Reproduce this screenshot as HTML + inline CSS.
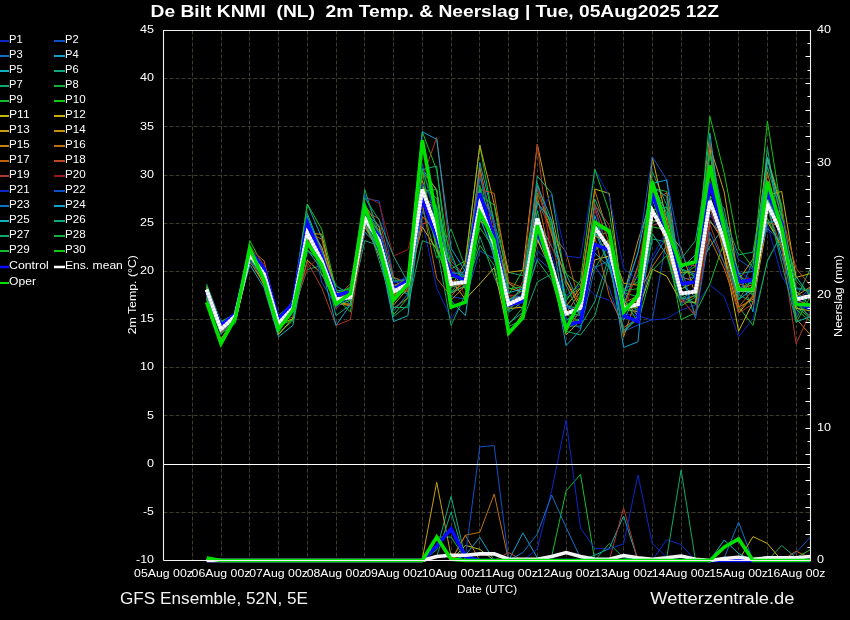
<!DOCTYPE html>
<html><head><meta charset="utf-8"><style>
html,body{margin:0;padding:0;background:#000;}
body{width:850px;height:620px;overflow:hidden;position:relative;font-family:"Liberation Sans",sans-serif;}
svg{position:absolute;left:0;top:0;will-change:transform;}
</style></head><body>
<svg width="850" height="620" viewBox="0 0 850 620" font-family="Liberation Sans, sans-serif">
<rect width="850" height="620" fill="#000"/>
<path d="M192.5,30.5V560.5 M221.5,30.5V560.5 M249.5,30.5V560.5 M278.5,30.5V560.5 M307.5,30.5V560.5 M336.5,30.5V560.5 M364.5,30.5V560.5 M393.5,30.5V560.5 M422.5,30.5V560.5 M451.5,30.5V560.5 M479.5,30.5V560.5 M508.5,30.5V560.5 M537.5,30.5V560.5 M566.5,30.5V560.5 M594.5,30.5V560.5 M623.5,30.5V560.5 M652.5,30.5V560.5 M681.5,30.5V560.5 M709.5,30.5V560.5 M738.5,30.5V560.5 M767.5,30.5V560.5 M796.5,30.5V560.5 M163.5,512.5H810.5 M163.5,415.5H810.5 M163.5,367.5H810.5 M163.5,319.5H810.5 M163.5,271.5H810.5 M163.5,223.5H810.5 M163.5,175.5H810.5 M163.5,126.5H810.5 M163.5,78.5H810.5" stroke="#3d3b2a" stroke-width="1" stroke-dasharray="4,2" fill="none"/>
<path d="M206.6,289.0 L221.0,329.3 L235.4,316.8 L249.8,258.9 L264.1,277.5 L278.5,321.6 L292.9,305.5 L307.3,218.6 L321.7,247.2 L336.0,295.1 L350.4,294.0 L364.8,227.5 L379.2,238.1 L393.5,282.8 L407.9,280.9 L422.3,221.1 L436.7,287.8 L451.1,318.7 L465.4,299.4 L479.8,220.1 L494.2,248.0 L508.6,300.6 L522.9,300.4 L537.3,217.5 L551.7,254.2 L566.1,300.3 L580.5,281.0 L594.8,295.0 L609.2,300.3 L623.6,313.8 L638.0,315.7 L652.3,320.1 L666.7,318.6 L681.1,310.0 L695.5,305.1 L709.9,284.9 L724.2,296.5 L738.6,336.9 L753.0,318.6 L767.4,261.8 L781.7,234.0 L796.1,293.9 L810.5,314.2" stroke="#0a28c8" stroke-width="1" fill="none"/>
<path d="M206.6,287.1 L221.0,333.1 L235.4,318.9 L249.8,257.0 L264.1,278.9 L278.5,324.2 L292.9,309.1 L307.3,251.4 L321.7,261.1 L336.0,296.5 L350.4,291.2 L364.8,198.2 L379.2,201.1 L393.5,277.1 L407.9,295.5 L422.3,183.9 L436.7,241.1 L451.1,296.6 L465.4,299.1 L479.8,250.8 L494.2,258.7 L508.6,299.3 L522.9,308.6 L537.3,257.9 L551.7,270.6 L566.1,295.9 L580.5,285.1 L594.8,265.8 L609.2,287.9 L623.6,331.6 L638.0,325.0 L652.3,319.6 L666.7,238.0 L681.1,279.6 L695.5,276.8 L709.9,181.2 L724.2,222.4 L738.6,259.5 L753.0,269.5 L767.4,157.8 L781.7,212.7 L796.1,314.7 L810.5,287.5" stroke="#1050c8" stroke-width="1" fill="none"/>
<path d="M206.6,287.4 L221.0,333.3 L235.4,320.0 L249.8,253.6 L264.1,281.2 L278.5,329.3 L292.9,306.8 L307.3,246.1 L321.7,247.9 L336.0,294.5 L350.4,295.3 L364.8,213.0 L379.2,225.4 L393.5,281.9 L407.9,278.4 L422.3,184.7 L436.7,236.8 L451.1,264.0 L465.4,278.8 L479.8,219.7 L494.2,235.5 L508.6,283.4 L522.9,293.3 L537.3,235.8 L551.7,268.6 L566.1,319.9 L580.5,314.4 L594.8,206.7 L609.2,254.9 L623.6,291.2 L638.0,313.8 L652.3,261.3 L666.7,236.9 L681.1,278.6 L695.5,261.8 L709.9,165.6 L724.2,222.7 L738.6,281.1 L753.0,279.3 L767.4,194.1 L781.7,226.8 L796.1,288.7 L810.5,291.4" stroke="#1070c8" stroke-width="1" fill="none"/>
<path d="M206.6,287.6 L221.0,322.9 L235.4,314.4 L249.8,251.1 L264.1,274.6 L278.5,323.7 L292.9,300.3 L307.3,204.0 L321.7,237.7 L336.0,290.7 L350.4,304.6 L364.8,232.0 L379.2,247.0 L393.5,292.2 L407.9,283.1 L422.3,197.5 L436.7,210.9 L451.1,271.3 L465.4,284.3 L479.8,162.4 L494.2,220.7 L508.6,300.3 L522.9,296.8 L537.3,221.3 L551.7,265.5 L566.1,345.6 L580.5,329.8 L594.8,230.3 L609.2,266.8 L623.6,320.3 L638.0,291.6 L652.3,186.5 L666.7,196.7 L681.1,297.6 L695.5,303.2 L709.9,221.9 L724.2,235.1 L738.6,271.5 L753.0,311.9 L767.4,204.3 L781.7,256.5 L796.1,301.6 L810.5,318.5" stroke="#10a0d0" stroke-width="1" fill="none"/>
<path d="M206.6,287.1 L221.0,327.8 L235.4,315.3 L249.8,248.1 L264.1,271.4 L278.5,322.5 L292.9,300.3 L307.3,213.5 L321.7,250.6 L336.0,285.9 L350.4,294.6 L364.8,206.7 L379.2,234.0 L393.5,286.2 L407.9,280.6 L422.3,168.7 L436.7,190.3 L451.1,300.6 L465.4,315.7 L479.8,217.2 L494.2,255.7 L508.6,323.3 L522.9,312.4 L537.3,219.4 L551.7,246.9 L566.1,273.8 L580.5,306.1 L594.8,226.1 L609.2,265.1 L623.6,305.5 L638.0,265.5 L652.3,210.1 L666.7,207.1 L681.1,268.8 L695.5,274.6 L709.9,246.3 L724.2,227.3 L738.6,286.4 L753.0,295.0 L767.4,199.7 L781.7,226.3 L796.1,276.5 L810.5,296.7" stroke="#10b0c0" stroke-width="1" fill="none"/>
<path d="M206.6,283.9 L221.0,322.8 L235.4,314.7 L249.8,254.2 L264.1,270.4 L278.5,321.5 L292.9,306.5 L307.3,216.4 L321.7,252.2 L336.0,315.7 L350.4,304.8 L364.8,240.6 L379.2,245.7 L393.5,292.1 L407.9,293.4 L422.3,198.6 L436.7,205.2 L451.1,274.1 L465.4,271.9 L479.8,190.2 L494.2,222.8 L508.6,272.4 L522.9,275.7 L537.3,201.3 L551.7,230.4 L566.1,326.1 L580.5,326.1 L594.8,301.6 L609.2,256.2 L623.6,333.1 L638.0,315.8 L652.3,239.0 L666.7,241.8 L681.1,299.8 L695.5,295.4 L709.9,149.7 L724.2,218.4 L738.6,273.9 L753.0,271.3 L767.4,182.9 L781.7,247.7 L796.1,318.8 L810.5,290.9" stroke="#10a880" stroke-width="1" fill="none"/>
<path d="M206.6,298.0 L221.0,329.0 L235.4,315.1 L249.8,251.5 L264.1,270.2 L278.5,321.3 L292.9,310.9 L307.3,269.5 L321.7,265.6 L336.0,305.1 L350.4,300.4 L364.8,227.2 L379.2,252.2 L393.5,316.7 L407.9,305.0 L422.3,240.6 L436.7,246.0 L451.1,325.4 L465.4,294.2 L479.8,236.4 L494.2,276.2 L508.6,312.4 L522.9,301.6 L537.3,260.4 L551.7,280.1 L566.1,324.6 L580.5,318.7 L594.8,222.7 L609.2,232.9 L623.6,289.1 L638.0,282.0 L652.3,171.8 L666.7,205.1 L681.1,275.2 L695.5,315.4 L709.9,195.9 L724.2,208.4 L738.6,282.7 L753.0,292.0 L767.4,146.8 L781.7,245.6 L796.1,298.7 L810.5,268.5" stroke="#10a868" stroke-width="1" fill="none"/>
<path d="M206.6,289.5 L221.0,324.5 L235.4,315.0 L249.8,248.1 L264.1,268.5 L278.5,323.9 L292.9,309.0 L307.3,230.7 L321.7,248.7 L336.0,297.2 L350.4,297.1 L364.8,225.4 L379.2,247.8 L393.5,285.7 L407.9,282.8 L422.3,206.8 L436.7,258.2 L451.1,229.0 L465.4,267.5 L479.8,170.5 L494.2,258.7 L508.6,306.8 L522.9,294.8 L537.3,183.1 L551.7,228.4 L566.1,298.1 L580.5,287.5 L594.8,268.9 L609.2,244.0 L623.6,300.5 L638.0,310.3 L652.3,188.1 L666.7,191.5 L681.1,294.2 L695.5,304.4 L709.9,204.1 L724.2,237.6 L738.6,294.6 L753.0,302.5 L767.4,157.4 L781.7,204.9 L796.1,302.6 L810.5,316.8" stroke="#10b040" stroke-width="1" fill="none"/>
<path d="M206.6,285.6 L221.0,321.5 L235.4,313.8 L249.8,251.5 L264.1,272.3 L278.5,332.9 L292.9,320.7 L307.3,245.3 L321.7,261.4 L336.0,305.7 L350.4,300.2 L364.8,216.9 L379.2,233.3 L393.5,278.2 L407.9,281.4 L422.3,187.7 L436.7,198.2 L451.1,272.4 L465.4,287.7 L479.8,227.5 L494.2,249.1 L508.6,308.5 L522.9,297.8 L537.3,218.9 L551.7,260.7 L566.1,314.3 L580.5,321.7 L594.8,235.4 L609.2,232.5 L623.6,292.7 L638.0,296.7 L652.3,197.7 L666.7,244.9 L681.1,319.6 L695.5,312.7 L709.9,283.9 L724.2,241.8 L738.6,306.9 L753.0,325.4 L767.4,260.8 L781.7,233.5 L796.1,306.3 L810.5,318.7" stroke="#10c030" stroke-width="1" fill="none"/>
<path d="M206.6,289.7 L221.0,328.0 L235.4,315.4 L249.8,240.6 L264.1,267.8 L278.5,320.9 L292.9,304.6 L307.3,204.0 L321.7,229.0 L336.0,289.5 L350.4,296.7 L364.8,218.9 L379.2,229.7 L393.5,290.4 L407.9,279.9 L422.3,131.7 L436.7,170.1 L451.1,268.9 L465.4,260.8 L479.8,145.2 L494.2,224.8 L508.6,294.6 L522.9,270.4 L537.3,193.3 L551.7,224.7 L566.1,273.9 L580.5,285.2 L594.8,244.5 L609.2,250.4 L623.6,303.4 L638.0,274.5 L652.3,179.5 L666.7,220.9 L681.1,276.0 L695.5,266.1 L709.9,173.4 L724.2,227.9 L738.6,288.8 L753.0,281.4 L767.4,218.1 L781.7,249.3 L796.1,309.4 L810.5,321.5" stroke="#10c810" stroke-width="1" fill="none"/>
<path d="M206.6,304.2 L221.0,338.9 L235.4,317.3 L249.8,252.5 L264.1,273.9 L278.5,324.3 L292.9,318.8 L307.3,223.2 L321.7,247.2 L336.0,292.0 L350.4,297.2 L364.8,219.6 L379.2,255.9 L393.5,295.0 L407.9,281.1 L422.3,226.9 L436.7,249.6 L451.1,280.3 L465.4,299.2 L479.8,283.9 L494.2,267.8 L508.6,335.0 L522.9,313.1 L537.3,240.3 L551.7,267.3 L566.1,306.1 L580.5,288.1 L594.8,189.1 L609.2,193.4 L623.6,309.1 L638.0,311.6 L652.3,269.1 L666.7,276.2 L681.1,301.9 L695.5,302.2 L709.9,196.0 L724.2,254.8 L738.6,331.2 L753.0,302.5 L767.4,221.9 L781.7,245.8 L796.1,308.4 L810.5,310.8" stroke="#c0b810" stroke-width="1" fill="none"/>
<path d="M206.6,288.1 L221.0,328.4 L235.4,317.2 L249.8,256.0 L264.1,285.6 L278.5,334.8 L292.9,318.0 L307.3,260.1 L321.7,273.9 L336.0,303.0 L350.4,305.6 L364.8,226.6 L379.2,248.1 L393.5,292.4 L407.9,281.8 L422.3,181.3 L436.7,245.7 L451.1,293.1 L465.4,285.7 L479.8,195.0 L494.2,235.8 L508.6,308.6 L522.9,307.2 L537.3,238.4 L551.7,272.3 L566.1,334.7 L580.5,320.4 L594.8,259.9 L609.2,256.0 L623.6,304.1 L638.0,308.0 L652.3,157.7 L666.7,220.3 L681.1,272.5 L695.5,271.6 L709.9,150.1 L724.2,254.5 L738.6,312.9 L753.0,296.4 L767.4,195.6 L781.7,191.4 L796.1,277.4 L810.5,273.5" stroke="#c8b010" stroke-width="1" fill="none"/>
<path d="M206.6,286.8 L221.0,326.0 L235.4,315.3 L249.8,249.6 L264.1,276.7 L278.5,321.0 L292.9,312.0 L307.3,233.6 L321.7,234.1 L336.0,295.3 L350.4,294.9 L364.8,204.8 L379.2,227.6 L393.5,296.1 L407.9,283.7 L422.3,171.6 L436.7,189.7 L451.1,287.3 L465.4,261.8 L479.8,145.2 L494.2,204.0 L508.6,272.4 L522.9,270.4 L537.3,144.2 L551.7,213.6 L566.1,281.0 L580.5,308.8 L594.8,248.5 L609.2,242.8 L623.6,283.2 L638.0,285.2 L652.3,220.5 L666.7,223.8 L681.1,289.2 L695.5,281.7 L709.9,146.1 L724.2,191.9 L738.6,280.1 L753.0,259.0 L767.4,158.4 L781.7,209.1 L796.1,296.4 L810.5,295.2" stroke="#c8a010" stroke-width="1" fill="none"/>
<path d="M206.6,288.4 L221.0,325.0 L235.4,316.6 L249.8,261.2 L264.1,284.1 L278.5,324.5 L292.9,312.2 L307.3,237.4 L321.7,267.3 L336.0,302.8 L350.4,304.1 L364.8,223.4 L379.2,255.2 L393.5,305.1 L407.9,288.2 L422.3,180.5 L436.7,230.4 L451.1,300.2 L465.4,285.7 L479.8,221.5 L494.2,227.0 L508.6,287.8 L522.9,292.4 L537.3,220.1 L551.7,268.7 L566.1,328.8 L580.5,319.7 L594.8,236.1 L609.2,242.2 L623.6,295.5 L638.0,240.6 L652.3,196.5 L666.7,229.5 L681.1,248.3 L695.5,295.5 L709.9,220.2 L724.2,242.3 L738.6,288.9 L753.0,284.6 L767.4,203.9 L781.7,228.1 L796.1,296.0 L810.5,286.7" stroke="#c89010" stroke-width="1" fill="none"/>
<path d="M206.6,300.2 L221.0,332.8 L235.4,320.9 L249.8,262.6 L264.1,276.1 L278.5,328.0 L292.9,307.6 L307.3,224.9 L321.7,251.1 L336.0,295.3 L350.4,295.5 L364.8,226.9 L379.2,246.1 L393.5,290.5 L407.9,291.3 L422.3,198.9 L436.7,208.5 L451.1,294.0 L465.4,279.9 L479.8,167.3 L494.2,236.1 L508.6,298.9 L522.9,296.7 L537.3,188.3 L551.7,235.0 L566.1,280.5 L580.5,304.4 L594.8,225.7 L609.2,247.7 L623.6,337.0 L638.0,293.2 L652.3,186.4 L666.7,251.2 L681.1,291.8 L695.5,292.7 L709.9,188.3 L724.2,226.9 L738.6,307.2 L753.0,299.2 L767.4,172.0 L781.7,234.0 L796.1,318.6 L810.5,335.0" stroke="#c88010" stroke-width="1" fill="none"/>
<path d="M206.6,292.0 L221.0,325.7 L235.4,314.8 L249.8,249.0 L264.1,260.8 L278.5,320.6 L292.9,309.0 L307.3,228.4 L321.7,250.6 L336.0,304.2 L350.4,305.0 L364.8,222.2 L379.2,240.9 L393.5,308.3 L407.9,298.0 L422.3,216.5 L436.7,231.9 L451.1,287.1 L465.4,283.9 L479.8,216.0 L494.2,232.7 L508.6,283.1 L522.9,292.6 L537.3,195.8 L551.7,265.2 L566.1,313.4 L580.5,291.2 L594.8,190.4 L609.2,236.3 L623.6,303.1 L638.0,295.8 L652.3,266.6 L666.7,245.8 L681.1,301.7 L695.5,295.4 L709.9,238.4 L724.2,268.5 L738.6,310.9 L753.0,295.5 L767.4,221.9 L781.7,227.1 L796.1,300.1 L810.5,305.0" stroke="#c07010" stroke-width="1" fill="none"/>
<path d="M206.6,296.0 L221.0,333.4 L235.4,318.1 L249.8,251.7 L264.1,274.0 L278.5,322.4 L292.9,311.3 L307.3,232.4 L321.7,239.1 L336.0,298.3 L350.4,283.9 L364.8,211.6 L379.2,234.0 L393.5,285.6 L407.9,279.4 L422.3,203.6 L436.7,278.4 L451.1,296.4 L465.4,279.4 L479.8,189.4 L494.2,193.4 L508.6,282.2 L522.9,287.6 L537.3,187.4 L551.7,233.1 L566.1,252.1 L580.5,306.7 L594.8,237.0 L609.2,295.5 L623.6,327.6 L638.0,318.2 L652.3,203.2 L666.7,192.5 L681.1,276.4 L695.5,282.5 L709.9,208.6 L724.2,249.9 L738.6,307.1 L753.0,289.7 L767.4,202.8 L781.7,232.5 L796.1,301.7 L810.5,287.4" stroke="#c06010" stroke-width="1" fill="none"/>
<path d="M206.6,289.4 L221.0,327.4 L235.4,315.5 L249.8,258.4 L264.1,270.8 L278.5,320.7 L292.9,311.1 L307.3,224.7 L321.7,250.4 L336.0,308.8 L350.4,292.7 L364.8,210.2 L379.2,219.0 L393.5,277.3 L407.9,282.6 L422.3,223.8 L436.7,220.3 L451.1,280.3 L465.4,284.1 L479.8,200.5 L494.2,241.3 L508.6,295.0 L522.9,296.9 L537.3,218.4 L551.7,276.1 L566.1,331.5 L580.5,310.2 L594.8,203.8 L609.2,242.9 L623.6,307.2 L638.0,266.9 L652.3,199.0 L666.7,217.1 L681.1,263.6 L695.5,265.8 L709.9,141.9 L724.2,232.5 L738.6,283.8 L753.0,288.1 L767.4,197.9 L781.7,214.6 L796.1,268.5 L810.5,285.6" stroke="#c04828" stroke-width="1" fill="none"/>
<path d="M206.6,289.5 L221.0,332.2 L235.4,315.9 L249.8,251.0 L264.1,274.2 L278.5,321.9 L292.9,317.0 L307.3,261.8 L321.7,287.8 L336.0,325.4 L350.4,319.6 L364.8,226.8 L379.2,237.2 L393.5,288.6 L407.9,288.3 L422.3,178.3 L436.7,137.5 L451.1,261.1 L465.4,276.1 L479.8,172.8 L494.2,226.5 L508.6,311.0 L522.9,281.1 L537.3,144.2 L551.7,265.3 L566.1,315.0 L580.5,300.1 L594.8,205.0 L609.2,225.3 L623.6,300.6 L638.0,315.2 L652.3,225.4 L666.7,220.8 L681.1,298.4 L695.5,316.2 L709.9,224.4 L724.2,263.1 L738.6,313.0 L753.0,304.0 L767.4,209.6 L781.7,247.0 L796.1,343.7 L810.5,312.4" stroke="#b03828" stroke-width="1" fill="none"/>
<path d="M206.6,293.2 L221.0,330.4 L235.4,315.3 L249.8,245.9 L264.1,264.5 L278.5,321.7 L292.9,308.7 L307.3,268.5 L321.7,254.3 L336.0,303.1 L350.4,285.9 L364.8,196.2 L379.2,203.5 L393.5,256.0 L407.9,249.7 L422.3,194.3 L436.7,247.0 L451.1,265.9 L465.4,296.8 L479.8,204.6 L494.2,241.2 L508.6,297.3 L522.9,291.6 L537.3,185.9 L551.7,246.6 L566.1,286.5 L580.5,301.6 L594.8,210.2 L609.2,253.2 L623.6,312.8 L638.0,267.8 L652.3,183.3 L666.7,226.1 L681.1,300.0 L695.5,314.1 L709.9,215.9 L724.2,225.2 L738.6,277.9 L753.0,278.6 L767.4,188.7 L781.7,208.6 L796.1,292.9 L810.5,300.0" stroke="#a01818" stroke-width="1" fill="none"/>
<path d="M206.6,288.4 L221.0,329.0 L235.4,317.4 L249.8,256.5 L264.1,273.1 L278.5,321.9 L292.9,314.6 L307.3,233.8 L321.7,259.1 L336.0,307.2 L350.4,296.2 L364.8,219.4 L379.2,243.9 L393.5,283.1 L407.9,276.2 L422.3,183.4 L436.7,208.3 L451.1,293.9 L465.4,269.1 L479.8,193.7 L494.2,222.1 L508.6,301.9 L522.9,290.7 L537.3,213.6 L551.7,194.3 L566.1,256.0 L580.5,257.9 L594.8,169.3 L609.2,196.2 L623.6,268.5 L638.0,280.1 L652.3,256.8 L666.7,231.7 L681.1,305.6 L695.5,285.9 L709.9,213.7 L724.2,241.4 L738.6,271.7 L753.0,280.6 L767.4,224.6 L781.7,276.2 L796.1,300.1 L810.5,288.7" stroke="#0a28c8" stroke-width="1" fill="none"/>
<path d="M206.6,289.1 L221.0,327.6 L235.4,314.9 L249.8,261.4 L264.1,279.1 L278.5,322.8 L292.9,305.3 L307.3,219.7 L321.7,282.1 L336.0,305.9 L350.4,297.1 L364.8,194.2 L379.2,233.2 L393.5,292.5 L407.9,284.0 L422.3,163.9 L436.7,227.4 L451.1,257.0 L465.4,283.5 L479.8,201.5 L494.2,248.3 L508.6,305.0 L522.9,302.0 L537.3,250.7 L551.7,264.7 L566.1,307.4 L580.5,312.2 L594.8,227.5 L609.2,231.1 L623.6,300.3 L638.0,252.1 L652.3,156.7 L666.7,179.9 L681.1,252.1 L695.5,281.0 L709.9,197.9 L724.2,231.7 L738.6,286.4 L753.0,291.4 L767.4,198.4 L781.7,238.9 L796.1,321.8 L810.5,316.3" stroke="#1050c8" stroke-width="1" fill="none"/>
<path d="M206.6,294.7 L221.0,334.5 L235.4,316.7 L249.8,260.5 L264.1,274.9 L278.5,329.0 L292.9,309.8 L307.3,220.8 L321.7,249.5 L336.0,301.4 L350.4,297.9 L364.8,217.5 L379.2,254.1 L393.5,310.9 L407.9,294.2 L422.3,211.0 L436.7,238.2 L451.1,271.9 L465.4,275.2 L479.8,177.5 L494.2,223.9 L508.6,298.6 L522.9,295.6 L537.3,220.6 L551.7,266.7 L566.1,318.1 L580.5,328.7 L594.8,267.9 L609.2,260.3 L623.6,331.3 L638.0,315.1 L652.3,209.1 L666.7,238.3 L681.1,266.8 L695.5,318.6 L709.9,232.0 L724.2,263.3 L738.6,294.7 L753.0,261.0 L767.4,228.5 L781.7,241.6 L796.1,296.2 L810.5,298.4" stroke="#1070c8" stroke-width="1" fill="none"/>
<path d="M206.6,299.1 L221.0,329.8 L235.4,315.5 L249.8,253.1 L264.1,276.2 L278.5,322.4 L292.9,310.1 L307.3,232.2 L321.7,266.7 L336.0,325.4 L350.4,304.6 L364.8,222.5 L379.2,233.7 L393.5,299.6 L407.9,276.2 L422.3,131.7 L436.7,139.4 L451.1,248.3 L465.4,271.4 L479.8,193.4 L494.2,258.8 L508.6,304.3 L522.9,285.9 L537.3,185.3 L551.7,220.4 L566.1,306.1 L580.5,313.5 L594.8,215.6 L609.2,257.0 L623.6,347.5 L638.0,341.8 L652.3,183.5 L666.7,179.9 L681.1,283.4 L695.5,297.2 L709.9,199.2 L724.2,247.4 L738.6,276.1 L753.0,284.8 L767.4,222.3 L781.7,220.7 L796.1,301.6 L810.5,294.4" stroke="#10a0d0" stroke-width="1" fill="none"/>
<path d="M206.6,291.3 L221.0,328.9 L235.4,317.6 L249.8,264.7 L264.1,287.8 L278.5,336.9 L292.9,325.4 L307.3,249.5 L321.7,269.6 L336.0,298.6 L350.4,296.4 L364.8,223.3 L379.2,249.3 L393.5,321.5 L407.9,315.7 L422.3,200.5 L436.7,218.0 L451.1,283.0 L465.4,283.6 L479.8,189.2 L494.2,237.4 L508.6,292.6 L522.9,288.9 L537.3,202.6 L551.7,220.8 L566.1,305.3 L580.5,309.5 L594.8,252.9 L609.2,267.7 L623.6,294.0 L638.0,252.7 L652.3,184.6 L666.7,213.1 L681.1,268.7 L695.5,254.6 L709.9,133.2 L724.2,241.0 L738.6,299.6 L753.0,288.7 L767.4,157.5 L781.7,219.5 L796.1,305.9 L810.5,303.9" stroke="#10b0c0" stroke-width="1" fill="none"/>
<path d="M206.6,296.1 L221.0,327.3 L235.4,316.3 L249.8,254.4 L264.1,266.1 L278.5,315.7 L292.9,302.9 L307.3,230.1 L321.7,253.5 L336.0,290.9 L350.4,289.4 L364.8,197.9 L379.2,220.1 L393.5,256.0 L407.9,282.2 L422.3,169.6 L436.7,166.1 L451.1,292.8 L465.4,285.5 L479.8,204.0 L494.2,249.4 L508.6,310.9 L522.9,294.0 L537.3,176.0 L551.7,193.4 L566.1,284.8 L580.5,316.6 L594.8,198.9 L609.2,232.6 L623.6,300.5 L638.0,316.0 L652.3,233.6 L666.7,254.9 L681.1,298.9 L695.5,289.9 L709.9,198.7 L724.2,233.2 L738.6,299.8 L753.0,277.4 L767.4,205.5 L781.7,262.8 L796.1,321.9 L810.5,316.6" stroke="#10a880" stroke-width="1" fill="none"/>
<path d="M206.6,294.7 L221.0,330.0 L235.4,319.8 L249.8,257.8 L264.1,270.6 L278.5,320.0 L292.9,306.4 L307.3,228.9 L321.7,259.5 L336.0,299.3 L350.4,293.9 L364.8,215.5 L379.2,260.8 L393.5,307.3 L407.9,307.7 L422.3,195.0 L436.7,246.5 L451.1,288.3 L465.4,268.8 L479.8,203.6 L494.2,254.3 L508.6,326.6 L522.9,319.6 L537.3,282.0 L551.7,273.9 L566.1,331.3 L580.5,335.0 L594.8,315.7 L609.2,263.8 L623.6,330.1 L638.0,319.3 L652.3,222.6 L666.7,214.1 L681.1,258.9 L695.5,240.6 L709.9,155.1 L724.2,217.4 L738.6,254.9 L753.0,252.1 L767.4,166.7 L781.7,216.5 L796.1,287.7 L810.5,290.4" stroke="#10a868" stroke-width="1" fill="none"/>
<path d="M206.6,297.9 L221.0,333.6 L235.4,323.4 L249.8,254.3 L264.1,272.3 L278.5,328.1 L292.9,305.2 L307.3,219.5 L321.7,275.1 L336.0,294.0 L350.4,290.4 L364.8,189.5 L379.2,235.1 L393.5,280.8 L407.9,280.9 L422.3,170.6 L436.7,209.1 L451.1,253.0 L465.4,289.8 L479.8,245.3 L494.2,265.4 L508.6,324.6 L522.9,307.4 L537.3,226.8 L551.7,264.8 L566.1,313.4 L580.5,315.1 L594.8,250.6 L609.2,239.4 L623.6,290.8 L638.0,288.6 L652.3,209.7 L666.7,207.0 L681.1,289.9 L695.5,275.5 L709.9,152.2 L724.2,226.5 L738.6,272.4 L753.0,295.0 L767.4,180.5 L781.7,224.3 L796.1,322.7 L810.5,296.2" stroke="#10b040" stroke-width="1" fill="none"/>
<path d="M206.6,288.3 L221.0,330.1 L235.4,316.7 L249.8,253.5 L264.1,275.4 L278.5,323.1 L292.9,311.6 L307.3,229.0 L321.7,257.9 L336.0,297.9 L350.4,311.9 L364.8,220.2 L379.2,241.4 L393.5,314.8 L407.9,297.8 L422.3,190.5 L436.7,189.7 L451.1,292.7 L465.4,273.8 L479.8,195.0 L494.2,205.1 L508.6,288.8 L522.9,286.8 L537.3,210.7 L551.7,269.4 L566.1,300.8 L580.5,280.6 L594.8,169.3 L609.2,211.8 L623.6,298.6 L638.0,322.6 L652.3,270.6 L666.7,255.5 L681.1,305.9 L695.5,297.1 L709.9,196.1 L724.2,242.3 L738.6,288.6 L753.0,290.9 L767.4,199.1 L781.7,220.8 L796.1,280.9 L810.5,295.0" stroke="#10c030" stroke-width="1" fill="none"/>
<path d="M206.6,288.8 L221.0,328.3 L235.4,314.7 L249.8,258.1 L264.1,277.6 L278.5,325.6 L292.9,320.0 L307.3,250.1 L321.7,261.6 L336.0,294.8 L350.4,287.1 L364.8,215.3 L379.2,250.4 L393.5,293.5 L407.9,280.8 L422.3,170.3 L436.7,251.5 L451.1,277.8 L465.4,275.9 L479.8,185.2 L494.2,242.9 L508.6,300.0 L522.9,290.0 L537.3,218.7 L551.7,274.6 L566.1,321.4 L580.5,305.8 L594.8,225.8 L609.2,232.0 L623.6,309.3 L638.0,305.9 L652.3,226.8 L666.7,229.8 L681.1,269.6 L695.5,276.7 L709.9,116.3 L724.2,173.1 L738.6,248.3 L753.0,267.7 L767.4,121.1 L781.7,212.5 L796.1,291.1 L810.5,306.3" stroke="#10c810" stroke-width="1" fill="none"/>
<path d="M206.6,560.5 L221.0,560.5 L235.4,560.5 L249.8,560.5 L264.1,560.5 L278.5,560.5 L292.9,560.5 L307.3,560.5 L321.7,560.5 L336.0,560.5 L350.4,560.5 L364.8,560.5 L379.2,560.5 L393.5,560.5 L407.9,560.5 L422.3,560.5 L436.7,560.5 L451.1,560.5 L465.4,560.5 L479.8,560.5 L494.2,560.5 L508.6,560.5 L522.9,560.5 L537.3,560.5 L551.7,560.5 L566.1,560.5 L580.5,560.5 L594.8,560.5 L609.2,560.5 L623.6,560.5 L638.0,560.5 L652.3,560.5 L666.7,539.6 L681.1,544.6 L695.5,560.5 L709.9,560.5 L724.2,560.5 L738.6,560.5 L753.0,560.5 L767.4,560.5 L781.7,560.5 L796.1,560.5 L810.5,560.5" stroke="#0a28c8" stroke-width="1" fill="none"/>
<path d="M206.6,560.5 L221.0,560.5 L235.4,560.5 L249.8,560.5 L264.1,560.5 L278.5,560.5 L292.9,560.5 L307.3,560.5 L321.7,560.5 L336.0,560.5 L350.4,560.5 L364.8,560.5 L379.2,560.5 L393.5,560.5 L407.9,560.5 L422.3,560.5 L436.7,560.5 L451.1,560.5 L465.4,560.5 L479.8,560.5 L494.2,560.5 L508.6,560.5 L522.9,560.5 L537.3,560.5 L551.7,560.5 L566.1,560.5 L580.5,560.5 L594.8,560.5 L609.2,560.5 L623.6,560.5 L638.0,560.5 L652.3,560.5 L666.7,560.5 L681.1,560.5 L695.5,560.5 L709.9,560.5 L724.2,560.5 L738.6,560.5 L753.0,560.5 L767.4,560.5 L781.7,560.5 L796.1,552.5 L810.5,537.0" stroke="#1050c8" stroke-width="1" fill="none"/>
<path d="M206.6,560.5 L221.0,560.5 L235.4,560.5 L249.8,560.5 L264.1,560.5 L278.5,560.5 L292.9,560.5 L307.3,560.5 L321.7,560.5 L336.0,560.5 L350.4,560.5 L364.8,560.5 L379.2,560.5 L393.5,560.5 L407.9,560.5 L422.3,560.5 L436.7,560.5 L451.1,560.5 L465.4,560.5 L479.8,560.5 L494.2,560.5 L508.6,560.5 L522.9,560.5 L537.3,560.5 L551.7,560.5 L566.1,560.5 L580.5,560.5 L594.8,560.5 L609.2,560.5 L623.6,560.5 L638.0,560.5 L652.3,560.5 L666.7,560.5 L681.1,560.5 L695.5,560.5 L709.9,560.5 L724.2,557.9 L738.6,522.1 L753.0,560.5 L767.4,560.5 L781.7,560.5 L796.1,560.5 L810.5,560.5" stroke="#1070c8" stroke-width="1" fill="none"/>
<path d="M206.6,560.5 L221.0,560.5 L235.4,560.5 L249.8,560.5 L264.1,560.5 L278.5,560.5 L292.9,560.5 L307.3,560.5 L321.7,560.5 L336.0,560.5 L350.4,560.5 L364.8,560.5 L379.2,560.5 L393.5,560.5 L407.9,560.5 L422.3,560.5 L436.7,560.5 L451.1,560.5 L465.4,560.5 L479.8,560.5 L494.2,560.5 L508.6,560.5 L522.9,532.9 L537.3,557.9 L551.7,560.5 L566.1,560.5 L580.5,560.5 L594.8,560.5 L609.2,560.5 L623.6,560.5 L638.0,560.5 L652.3,560.5 L666.7,560.5 L681.1,560.5 L695.5,560.5 L709.9,560.5 L724.2,560.5 L738.6,560.5 L753.0,560.5 L767.4,560.5 L781.7,560.5 L796.1,560.5 L810.5,560.5" stroke="#10a0d0" stroke-width="1" fill="none"/>
<path d="M206.6,560.5 L221.0,560.5 L235.4,560.5 L249.8,560.5 L264.1,560.5 L278.5,560.5 L292.9,560.5 L307.3,560.5 L321.7,560.5 L336.0,560.5 L350.4,560.5 L364.8,560.5 L379.2,560.5 L393.5,560.5 L407.9,560.5 L422.3,560.5 L436.7,560.5 L451.1,560.5 L465.4,560.5 L479.8,560.5 L494.2,560.5 L508.6,560.5 L522.9,560.5 L537.3,560.5 L551.7,560.5 L566.1,560.5 L580.5,560.5 L594.8,555.2 L609.2,548.6 L623.6,516.0 L638.0,560.5 L652.3,560.5 L666.7,560.5 L681.1,560.5 L695.5,560.5 L709.9,560.5 L724.2,560.5 L738.6,560.5 L753.0,560.5 L767.4,560.5 L781.7,560.5 L796.1,560.5 L810.5,560.5" stroke="#10b0c0" stroke-width="1" fill="none"/>
<path d="M206.6,560.5 L221.0,560.5 L235.4,560.5 L249.8,560.5 L264.1,560.5 L278.5,560.5 L292.9,560.5 L307.3,560.5 L321.7,560.5 L336.0,560.5 L350.4,560.5 L364.8,560.5 L379.2,560.5 L393.5,560.5 L407.9,560.5 L422.3,560.5 L436.7,549.9 L451.1,496.4 L465.4,557.9 L479.8,560.5 L494.2,560.5 L508.6,560.5 L522.9,560.5 L537.3,560.5 L551.7,560.5 L566.1,560.5 L580.5,560.5 L594.8,560.5 L609.2,560.5 L623.6,560.5 L638.0,560.5 L652.3,560.5 L666.7,560.5 L681.1,560.5 L695.5,560.5 L709.9,560.5 L724.2,560.5 L738.6,560.5 L753.0,560.5 L767.4,560.5 L781.7,560.5 L796.1,560.5 L810.5,560.5" stroke="#10a880" stroke-width="1" fill="none"/>
<path d="M206.6,560.5 L221.0,560.5 L235.4,560.5 L249.8,560.5 L264.1,560.5 L278.5,560.5 L292.9,560.5 L307.3,560.5 L321.7,560.5 L336.0,560.5 L350.4,560.5 L364.8,560.5 L379.2,560.5 L393.5,560.5 L407.9,560.5 L422.3,560.5 L436.7,560.5 L451.1,560.5 L465.4,560.5 L479.8,560.5 L494.2,560.5 L508.6,560.5 L522.9,560.5 L537.3,560.5 L551.7,560.5 L566.1,560.5 L580.5,560.5 L594.8,560.5 L609.2,560.5 L623.6,560.5 L638.0,560.5 L652.3,560.5 L666.7,560.5 L681.1,560.5 L695.5,560.5 L709.9,560.5 L724.2,560.5 L738.6,560.5 L753.0,560.5 L767.4,560.5 L781.7,545.5 L796.1,557.9 L810.5,560.5" stroke="#10a868" stroke-width="1" fill="none"/>
<path d="M206.6,560.5 L221.0,560.5 L235.4,560.5 L249.8,560.5 L264.1,560.5 L278.5,560.5 L292.9,560.5 L307.3,560.5 L321.7,560.5 L336.0,560.5 L350.4,560.5 L364.8,560.5 L379.2,560.5 L393.5,560.5 L407.9,560.5 L422.3,560.5 L436.7,537.0 L451.1,537.0 L465.4,559.2 L479.8,560.5 L494.2,560.5 L508.6,560.5 L522.9,560.5 L537.3,560.5 L551.7,560.5 L566.1,560.5 L580.5,560.5 L594.8,560.5 L609.2,560.5 L623.6,560.5 L638.0,560.5 L652.3,560.5 L666.7,560.5 L681.1,560.5 L695.5,560.5 L709.9,560.5 L724.2,560.5 L738.6,560.5 L753.0,560.5 L767.4,560.5 L781.7,560.5 L796.1,560.5 L810.5,560.5" stroke="#10b040" stroke-width="1" fill="none"/>
<path d="M206.6,560.5 L221.0,560.5 L235.4,560.5 L249.8,560.5 L264.1,560.5 L278.5,560.5 L292.9,560.5 L307.3,560.5 L321.7,560.5 L336.0,560.5 L350.4,560.5 L364.8,560.5 L379.2,560.5 L393.5,560.5 L407.9,560.5 L422.3,560.5 L436.7,560.5 L451.1,560.5 L465.4,560.5 L479.8,560.5 L494.2,560.5 L508.6,560.5 L522.9,560.5 L537.3,560.5 L551.7,556.5 L566.1,490.9 L580.5,474.4 L594.8,560.5 L609.2,560.5 L623.6,560.5 L638.0,560.5 L652.3,560.5 L666.7,560.5 L681.1,560.5 L695.5,560.5 L709.9,560.5 L724.2,560.5 L738.6,560.5 L753.0,560.5 L767.4,560.5 L781.7,560.5 L796.1,560.5 L810.5,560.5" stroke="#10c030" stroke-width="1" fill="none"/>
<path d="M206.6,560.5 L221.0,560.5 L235.4,560.5 L249.8,560.5 L264.1,560.5 L278.5,560.5 L292.9,560.5 L307.3,560.5 L321.7,560.5 L336.0,560.5 L350.4,560.5 L364.8,560.5 L379.2,560.5 L393.5,560.5 L407.9,560.5 L422.3,560.5 L436.7,560.5 L451.1,560.5 L465.4,560.5 L479.8,560.5 L494.2,560.5 L508.6,560.5 L522.9,560.5 L537.3,560.5 L551.7,560.5 L566.1,560.5 L580.5,560.5 L594.8,560.5 L609.2,560.5 L623.6,560.5 L638.0,560.5 L652.3,560.5 L666.7,560.5 L681.1,560.5 L695.5,560.5 L709.9,560.5 L724.2,560.5 L738.6,560.5 L753.0,560.5 L767.4,560.5 L781.7,560.5 L796.1,560.5 L810.5,560.5" stroke="#10c810" stroke-width="1" fill="none"/>
<path d="M206.6,560.5 L221.0,560.5 L235.4,560.5 L249.8,560.5 L264.1,560.5 L278.5,560.5 L292.9,560.5 L307.3,560.5 L321.7,560.5 L336.0,560.5 L350.4,560.5 L364.8,560.5 L379.2,560.5 L393.5,560.5 L407.9,560.5 L422.3,560.5 L436.7,560.5 L451.1,560.5 L465.4,545.4 L479.8,549.4 L494.2,560.5 L508.6,560.5 L522.9,560.5 L537.3,560.5 L551.7,560.5 L566.1,560.5 L580.5,560.5 L594.8,560.5 L609.2,560.5 L623.6,560.5 L638.0,560.5 L652.3,560.5 L666.7,560.5 L681.1,560.5 L695.5,560.5 L709.9,560.5 L724.2,560.5 L738.6,560.5 L753.0,560.5 L767.4,560.5 L781.7,560.5 L796.1,560.5 L810.5,560.5" stroke="#c0b810" stroke-width="1" fill="none"/>
<path d="M206.6,560.5 L221.0,560.5 L235.4,560.5 L249.8,560.5 L264.1,560.5 L278.5,560.5 L292.9,560.5 L307.3,560.5 L321.7,560.5 L336.0,560.5 L350.4,560.5 L364.8,560.5 L379.2,560.5 L393.5,560.5 L407.9,560.5 L422.3,560.5 L436.7,560.5 L451.1,560.5 L465.4,560.5 L479.8,560.5 L494.2,560.5 L508.6,560.5 L522.9,560.5 L537.3,560.5 L551.7,560.5 L566.1,560.5 L580.5,560.5 L594.8,560.5 L609.2,560.5 L623.6,560.5 L638.0,560.5 L652.3,560.5 L666.7,560.5 L681.1,560.5 L695.5,560.5 L709.9,560.5 L724.2,560.5 L738.6,560.5 L753.0,536.6 L767.4,543.5 L781.7,560.5 L796.1,560.5 L810.5,560.5" stroke="#c8b010" stroke-width="1" fill="none"/>
<path d="M206.6,560.5 L221.0,560.5 L235.4,560.5 L249.8,560.5 L264.1,560.5 L278.5,560.5 L292.9,560.5 L307.3,560.5 L321.7,560.5 L336.0,560.5 L350.4,560.5 L364.8,560.5 L379.2,560.5 L393.5,560.5 L407.9,560.5 L422.3,559.2 L436.7,482.3 L451.1,556.5 L465.4,560.5 L479.8,560.5 L494.2,560.5 L508.6,560.5 L522.9,560.5 L537.3,560.5 L551.7,560.5 L566.1,560.5 L580.5,560.5 L594.8,560.5 L609.2,560.5 L623.6,560.5 L638.0,560.5 L652.3,560.5 L666.7,560.5 L681.1,560.5 L695.5,560.5 L709.9,560.5 L724.2,560.5 L738.6,560.5 L753.0,560.5 L767.4,560.5 L781.7,560.5 L796.1,560.5 L810.5,560.5" stroke="#c8a010" stroke-width="1" fill="none"/>
<path d="M206.6,560.5 L221.0,560.5 L235.4,560.5 L249.8,560.5 L264.1,560.5 L278.5,560.5 L292.9,560.5 L307.3,560.5 L321.7,560.5 L336.0,560.5 L350.4,560.5 L364.8,560.5 L379.2,560.5 L393.5,560.5 L407.9,560.5 L422.3,560.5 L436.7,560.5 L451.1,560.5 L465.4,560.5 L479.8,560.5 L494.2,560.5 L508.6,560.5 L522.9,560.5 L537.3,560.5 L551.7,560.5 L566.1,560.5 L580.5,560.5 L594.8,560.5 L609.2,560.5 L623.6,560.5 L638.0,560.5 L652.3,560.5 L666.7,560.5 L681.1,560.5 L695.5,560.5 L709.9,560.5 L724.2,560.5 L738.6,560.5 L753.0,560.5 L767.4,560.5 L781.7,560.5 L796.1,560.5 L810.5,560.5" stroke="#c89010" stroke-width="1" fill="none"/>
<path d="M206.6,560.5 L221.0,560.5 L235.4,560.5 L249.8,560.5 L264.1,560.5 L278.5,560.5 L292.9,560.5 L307.3,560.5 L321.7,560.5 L336.0,560.5 L350.4,560.5 L364.8,560.5 L379.2,560.5 L393.5,560.5 L407.9,560.5 L422.3,560.5 L436.7,560.5 L451.1,560.5 L465.4,535.3 L479.8,560.5 L494.2,560.5 L508.6,560.5 L522.9,560.5 L537.3,560.5 L551.7,560.5 L566.1,560.5 L580.5,560.5 L594.8,560.5 L609.2,560.5 L623.6,560.5 L638.0,560.5 L652.3,560.5 L666.7,560.5 L681.1,560.5 L695.5,560.5 L709.9,560.5 L724.2,560.5 L738.6,560.5 L753.0,560.5 L767.4,560.5 L781.7,560.5 L796.1,560.5 L810.5,560.5" stroke="#c88010" stroke-width="1" fill="none"/>
<path d="M206.6,560.5 L221.0,560.5 L235.4,560.5 L249.8,560.5 L264.1,560.5 L278.5,560.5 L292.9,560.5 L307.3,560.5 L321.7,560.5 L336.0,560.5 L350.4,560.5 L364.8,560.5 L379.2,560.5 L393.5,560.5 L407.9,560.5 L422.3,560.5 L436.7,560.5 L451.1,560.5 L465.4,535.1 L479.8,532.4 L494.2,494.0 L508.6,560.5 L522.9,560.5 L537.3,560.5 L551.7,560.5 L566.1,560.5 L580.5,560.5 L594.8,560.5 L609.2,560.5 L623.6,560.5 L638.0,560.5 L652.3,560.5 L666.7,560.5 L681.1,560.5 L695.5,560.5 L709.9,560.5 L724.2,560.5 L738.6,560.5 L753.0,560.5 L767.4,560.5 L781.7,560.5 L796.1,560.5 L810.5,560.5" stroke="#c07010" stroke-width="1" fill="none"/>
<path d="M206.6,560.5 L221.0,560.5 L235.4,560.5 L249.8,560.5 L264.1,560.5 L278.5,560.5 L292.9,560.5 L307.3,560.5 L321.7,560.5 L336.0,560.5 L350.4,560.5 L364.8,560.5 L379.2,560.5 L393.5,560.5 L407.9,560.5 L422.3,560.5 L436.7,560.5 L451.1,560.5 L465.4,560.5 L479.8,560.5 L494.2,560.5 L508.6,560.5 L522.9,560.5 L537.3,560.5 L551.7,560.5 L566.1,560.5 L580.5,560.5 L594.8,560.5 L609.2,560.5 L623.6,560.5 L638.0,560.5 L652.3,560.5 L666.7,560.5 L681.1,560.5 L695.5,560.5 L709.9,560.5 L724.2,560.5 L738.6,560.5 L753.0,560.5 L767.4,560.5 L781.7,560.5 L796.1,551.2 L810.5,557.9" stroke="#c06010" stroke-width="1" fill="none"/>
<path d="M206.6,560.5 L221.0,560.5 L235.4,560.5 L249.8,560.5 L264.1,560.5 L278.5,560.5 L292.9,560.5 L307.3,560.5 L321.7,560.5 L336.0,560.5 L350.4,560.5 L364.8,560.5 L379.2,560.5 L393.5,560.5 L407.9,560.5 L422.3,560.5 L436.7,560.5 L451.1,560.5 L465.4,560.5 L479.8,560.5 L494.2,560.5 L508.6,552.5 L522.9,560.5 L537.3,560.5 L551.7,560.5 L566.1,560.5 L580.5,560.5 L594.8,560.5 L609.2,560.5 L623.6,560.5 L638.0,560.5 L652.3,560.5 L666.7,560.5 L681.1,560.5 L695.5,560.5 L709.9,560.5 L724.2,560.5 L738.6,560.5 L753.0,560.5 L767.4,560.5 L781.7,560.5 L796.1,560.5 L810.5,560.5" stroke="#c04828" stroke-width="1" fill="none"/>
<path d="M206.6,560.5 L221.0,560.5 L235.4,560.5 L249.8,560.5 L264.1,560.5 L278.5,560.5 L292.9,560.5 L307.3,560.5 L321.7,560.5 L336.0,560.5 L350.4,560.5 L364.8,560.5 L379.2,560.5 L393.5,560.5 L407.9,560.5 L422.3,560.5 L436.7,560.5 L451.1,560.5 L465.4,560.5 L479.8,560.5 L494.2,560.5 L508.6,560.5 L522.9,560.5 L537.3,560.5 L551.7,560.5 L566.1,560.5 L580.5,560.5 L594.8,560.5 L609.2,560.5 L623.6,508.0 L638.0,560.5 L652.3,560.5 L666.7,560.5 L681.1,560.5 L695.5,560.5 L709.9,560.5 L724.2,560.5 L738.6,560.5 L753.0,560.5 L767.4,560.5 L781.7,560.5 L796.1,560.5 L810.5,560.5" stroke="#b03828" stroke-width="1" fill="none"/>
<path d="M206.6,560.5 L221.0,560.5 L235.4,560.5 L249.8,560.5 L264.1,560.5 L278.5,560.5 L292.9,560.5 L307.3,560.5 L321.7,560.5 L336.0,560.5 L350.4,560.5 L364.8,560.5 L379.2,560.5 L393.5,560.5 L407.9,560.5 L422.3,560.5 L436.7,560.5 L451.1,560.5 L465.4,560.5 L479.8,560.5 L494.2,560.5 L508.6,560.5 L522.9,560.5 L537.3,560.5 L551.7,560.5 L566.1,560.5 L580.5,560.5 L594.8,560.5 L609.2,560.5 L623.6,560.5 L638.0,560.5 L652.3,560.5 L666.7,560.5 L681.1,560.5 L695.5,560.5 L709.9,560.5 L724.2,560.5 L738.6,560.5 L753.0,560.5 L767.4,560.5 L781.7,560.5 L796.1,560.5 L810.5,560.5" stroke="#a01818" stroke-width="1" fill="none"/>
<path d="M206.6,560.5 L221.0,560.5 L235.4,560.5 L249.8,560.5 L264.1,560.5 L278.5,560.5 L292.9,560.5 L307.3,560.5 L321.7,560.5 L336.0,560.5 L350.4,560.5 L364.8,560.5 L379.2,560.5 L393.5,560.5 L407.9,560.5 L422.3,560.5 L436.7,560.5 L451.1,560.5 L465.4,560.5 L479.8,560.5 L494.2,560.5 L508.6,560.5 L522.9,560.5 L537.3,549.0 L551.7,490.3 L566.1,420.1 L580.5,528.0 L594.8,548.6 L609.2,549.0 L623.6,543.9 L638.0,475.0 L652.3,543.5 L666.7,557.1 L681.1,560.5 L695.5,560.5 L709.9,560.5 L724.2,560.5 L738.6,560.5 L753.0,560.5 L767.4,560.5 L781.7,560.5 L796.1,560.5 L810.5,560.5" stroke="#0a28c8" stroke-width="1" fill="none"/>
<path d="M206.6,560.5 L221.0,560.5 L235.4,560.5 L249.8,560.5 L264.1,560.5 L278.5,560.5 L292.9,560.5 L307.3,560.5 L321.7,560.5 L336.0,560.5 L350.4,560.5 L364.8,560.5 L379.2,560.5 L393.5,560.5 L407.9,560.5 L422.3,560.5 L436.7,560.5 L451.1,560.5 L465.4,556.0 L479.8,446.9 L494.2,445.6 L508.6,560.5 L522.9,560.5 L537.3,560.5 L551.7,560.5 L566.1,560.5 L580.5,560.5 L594.8,560.5 L609.2,560.5 L623.6,560.5 L638.0,560.5 L652.3,560.5 L666.7,560.5 L681.1,560.5 L695.5,560.5 L709.9,560.5 L724.2,560.5 L738.6,560.5 L753.0,560.5 L767.4,560.5 L781.7,560.5 L796.1,560.5 L810.5,560.5" stroke="#1050c8" stroke-width="1" fill="none"/>
<path d="M206.6,560.5 L221.0,560.5 L235.4,560.5 L249.8,560.5 L264.1,560.5 L278.5,560.5 L292.9,560.5 L307.3,560.5 L321.7,560.5 L336.0,560.5 L350.4,560.5 L364.8,560.5 L379.2,560.5 L393.5,560.5 L407.9,560.5 L422.3,560.5 L436.7,560.5 L451.1,560.5 L465.4,560.5 L479.8,560.5 L494.2,560.5 L508.6,560.5 L522.9,552.5 L537.3,534.0 L551.7,495.0 L566.1,527.4 L580.5,557.9 L594.8,560.5 L609.2,560.5 L623.6,560.5 L638.0,560.5 L652.3,560.5 L666.7,560.5 L681.1,560.5 L695.5,560.5 L709.9,560.5 L724.2,560.5 L738.6,560.5 L753.0,560.5 L767.4,560.5 L781.7,560.5 L796.1,560.5 L810.5,560.5" stroke="#1070c8" stroke-width="1" fill="none"/>
<path d="M206.6,560.5 L221.0,560.5 L235.4,560.5 L249.8,560.5 L264.1,560.5 L278.5,560.5 L292.9,560.5 L307.3,560.5 L321.7,560.5 L336.0,560.5 L350.4,560.5 L364.8,560.5 L379.2,560.5 L393.5,560.5 L407.9,560.5 L422.3,560.5 L436.7,560.5 L451.1,560.5 L465.4,555.2 L479.8,537.4 L494.2,560.5 L508.6,560.5 L522.9,560.5 L537.3,560.5 L551.7,560.5 L566.1,560.5 L580.5,560.5 L594.8,560.5 L609.2,560.5 L623.6,560.5 L638.0,560.5 L652.3,560.5 L666.7,560.5 L681.1,560.5 L695.5,560.5 L709.9,560.5 L724.2,560.5 L738.6,560.5 L753.0,560.5 L767.4,560.5 L781.7,560.5 L796.1,560.5 L810.5,560.5" stroke="#10a0d0" stroke-width="1" fill="none"/>
<path d="M206.6,560.5 L221.0,560.5 L235.4,560.5 L249.8,560.5 L264.1,560.5 L278.5,560.5 L292.9,560.5 L307.3,560.5 L321.7,560.5 L336.0,560.5 L350.4,560.5 L364.8,560.5 L379.2,560.5 L393.5,560.5 L407.9,560.5 L422.3,560.5 L436.7,560.5 L451.1,560.5 L465.4,560.5 L479.8,560.5 L494.2,560.5 L508.6,560.5 L522.9,560.5 L537.3,560.5 L551.7,560.5 L566.1,560.5 L580.5,560.5 L594.8,560.5 L609.2,560.5 L623.6,560.5 L638.0,560.5 L652.3,560.5 L666.7,560.5 L681.1,560.5 L695.5,560.5 L709.9,560.5 L724.2,540.0 L738.6,553.5 L753.0,560.5 L767.4,560.5 L781.7,560.5 L796.1,560.5 L810.5,560.5" stroke="#10b0c0" stroke-width="1" fill="none"/>
<path d="M206.6,560.5 L221.0,560.5 L235.4,560.5 L249.8,560.5 L264.1,560.5 L278.5,560.5 L292.9,560.5 L307.3,560.5 L321.7,560.5 L336.0,560.5 L350.4,560.5 L364.8,560.5 L379.2,560.5 L393.5,560.5 L407.9,560.5 L422.3,560.5 L436.7,556.5 L451.1,512.0 L465.4,560.5 L479.8,560.5 L494.2,560.5 L508.6,560.5 L522.9,560.5 L537.3,560.5 L551.7,560.5 L566.1,560.5 L580.5,560.5 L594.8,560.5 L609.2,560.5 L623.6,560.5 L638.0,560.5 L652.3,560.5 L666.7,560.5 L681.1,560.5 L695.5,560.5 L709.9,560.5 L724.2,560.5 L738.6,560.5 L753.0,560.5 L767.4,560.5 L781.7,560.5 L796.1,560.5 L810.5,560.5" stroke="#10a880" stroke-width="1" fill="none"/>
<path d="M206.6,560.5 L221.0,560.5 L235.4,560.5 L249.8,560.5 L264.1,560.5 L278.5,560.5 L292.9,560.5 L307.3,560.5 L321.7,560.5 L336.0,560.5 L350.4,560.5 L364.8,560.5 L379.2,560.5 L393.5,560.5 L407.9,560.5 L422.3,560.5 L436.7,560.5 L451.1,560.5 L465.4,560.5 L479.8,560.5 L494.2,560.5 L508.6,560.5 L522.9,560.5 L537.3,560.5 L551.7,560.5 L566.1,560.5 L580.5,560.5 L594.8,560.5 L609.2,560.5 L623.6,560.5 L638.0,560.5 L652.3,560.5 L666.7,557.9 L681.1,470.0 L695.5,560.5 L709.9,560.5 L724.2,560.5 L738.6,560.5 L753.0,560.5 L767.4,560.5 L781.7,560.5 L796.1,560.5 L810.5,560.5" stroke="#10a868" stroke-width="1" fill="none"/>
<path d="M206.6,560.5 L221.0,560.5 L235.4,560.5 L249.8,560.5 L264.1,560.5 L278.5,560.5 L292.9,560.5 L307.3,560.5 L321.7,560.5 L336.0,560.5 L350.4,560.5 L364.8,560.5 L379.2,560.5 L393.5,560.5 L407.9,560.5 L422.3,560.5 L436.7,560.5 L451.1,560.5 L465.4,560.5 L479.8,560.5 L494.2,560.5 L508.6,560.5 L522.9,560.5 L537.3,560.5 L551.7,560.5 L566.1,560.5 L580.5,560.5 L594.8,560.5 L609.2,543.5 L623.6,557.9 L638.0,560.5 L652.3,560.5 L666.7,560.5 L681.1,560.5 L695.5,560.5 L709.9,560.5 L724.2,560.5 L738.6,560.5 L753.0,560.5 L767.4,560.5 L781.7,560.5 L796.1,560.5 L810.5,560.5" stroke="#10b040" stroke-width="1" fill="none"/>
<path d="M206.6,560.5 L221.0,560.5 L235.4,560.5 L249.8,560.5 L264.1,560.5 L278.5,560.5 L292.9,560.5 L307.3,560.5 L321.7,560.5 L336.0,560.5 L350.4,560.5 L364.8,560.5 L379.2,560.5 L393.5,560.5 L407.9,560.5 L422.3,560.5 L436.7,560.5 L451.1,560.5 L465.4,560.5 L479.8,560.5 L494.2,560.5 L508.6,560.5 L522.9,560.5 L537.3,560.5 L551.7,560.5 L566.1,560.5 L580.5,560.5 L594.8,560.5 L609.2,560.5 L623.6,560.5 L638.0,560.5 L652.3,560.5 L666.7,560.5 L681.1,560.5 L695.5,560.5 L709.9,560.5 L724.2,560.5 L738.6,560.5 L753.0,560.5 L767.4,560.5 L781.7,560.5 L796.1,557.9 L810.5,549.5" stroke="#10c030" stroke-width="1" fill="none"/>
<path d="M206.6,560.5 L221.0,560.5 L235.4,560.5 L249.8,560.5 L264.1,560.5 L278.5,560.5 L292.9,560.5 L307.3,560.5 L321.7,560.5 L336.0,560.5 L350.4,560.5 L364.8,560.5 L379.2,560.5 L393.5,560.5 L407.9,560.5 L422.3,560.5 L436.7,560.5 L451.1,560.5 L465.4,560.5 L479.8,560.5 L494.2,560.5 L508.6,560.5 L522.9,560.5 L537.3,560.5 L551.7,560.5 L566.1,560.5 L580.5,560.5 L594.8,560.5 L609.2,560.5 L623.6,560.5 L638.0,560.5 L652.3,560.5 L666.7,560.5 L681.1,560.5 L695.5,560.5 L709.9,560.5 L724.2,560.5 L738.6,560.5 L753.0,560.5 L767.4,560.5 L781.7,560.5 L796.1,560.5 L810.5,560.5" stroke="#10c810" stroke-width="1" fill="none"/>
<path d="M206.6,560.5 L221.0,560.5 L235.4,560.5 L249.8,560.5 L264.1,560.5 L278.5,560.5 L292.9,560.5 L307.3,560.5 L321.7,560.5 L336.0,560.5 L350.4,560.5 L364.8,560.5 L379.2,560.5 L393.5,560.5 L407.9,560.5 L422.3,560.5 L436.7,545.9 L451.1,529.0 L465.4,556.5 L479.8,560.5 L494.2,560.5 L508.6,560.5 L522.9,560.5 L537.3,560.5 L551.7,560.5 L566.1,560.5 L580.5,560.5 L594.8,560.5 L609.2,560.5 L623.6,560.5 L638.0,560.5 L652.3,560.5 L666.7,560.5 L681.1,560.5 L695.5,560.5 L709.9,560.5 L724.2,560.5 L738.6,560.5 L753.0,560.5 L767.4,560.5 L781.7,560.5 L796.1,560.5 L810.5,560.5" stroke="#0a0aff" stroke-width="3.6" fill="none"/>
<path d="M206.6,560.5 L221.0,560.5 L235.4,560.5 L249.8,560.5 L264.1,560.5 L278.5,560.5 L292.9,560.5 L307.3,560.5 L321.7,560.5 L336.0,560.5 L350.4,560.5 L364.8,560.5 L379.2,560.5 L393.5,560.5 L407.9,560.5 L422.3,560.5 L436.7,556.5 L451.1,555.2 L465.4,555.2 L479.8,553.9 L494.2,553.9 L508.6,559.2 L522.9,559.2 L537.3,559.2 L551.7,556.5 L566.1,552.5 L580.5,556.5 L594.8,559.2 L609.2,559.2 L623.6,555.5 L638.0,557.9 L652.3,559.2 L666.7,557.9 L681.1,556.0 L695.5,559.2 L709.9,560.5 L724.2,558.5 L738.6,557.2 L753.0,559.2 L767.4,557.9 L781.7,557.9 L796.1,557.9 L810.5,556.5" stroke="#f4f4f8" stroke-width="3.6" fill="none"/>
<path d="M206.6,557.9 L221.0,560.5 L235.4,560.5 L249.8,560.5 L264.1,560.5 L278.5,560.5 L292.9,560.5 L307.3,560.5 L321.7,560.5 L336.0,560.5 L350.4,560.5 L364.8,560.5 L379.2,560.5 L393.5,560.5 L407.9,560.5 L422.3,560.5 L436.7,537.0 L451.1,559.2 L465.4,560.5 L479.8,560.5 L494.2,560.5 L508.6,560.5 L522.9,560.5 L537.3,560.5 L551.7,560.5 L566.1,560.5 L580.5,560.5 L594.8,560.5 L609.2,560.5 L623.6,560.5 L638.0,560.5 L652.3,560.5 L666.7,560.5 L681.1,560.5 L695.5,560.5 L709.9,560.5 L724.2,547.2 L738.6,539.0 L753.0,560.5 L767.4,560.5 L781.7,560.5 L796.1,560.5 L810.5,560.5" stroke="#00e000" stroke-width="3.6" fill="none"/>
<path d="M206.6,290.7 L221.0,325.4 L235.4,313.8 L249.8,250.2 L264.1,268.5 L278.5,319.6 L292.9,303.2 L307.3,223.2 L321.7,257.0 L336.0,295.5 L350.4,291.6 L364.8,216.5 L379.2,236.7 L393.5,289.7 L407.9,280.1 L422.3,199.1 L436.7,236.7 L451.1,274.3 L465.4,280.1 L479.8,193.4 L494.2,236.7 L508.6,305.1 L522.9,301.3 L537.3,230.9 L551.7,268.5 L566.1,325.4 L580.5,321.5 L594.8,244.4 L609.2,250.2 L623.6,315.7 L638.0,321.5 L652.3,193.4 L666.7,232.9 L681.1,283.9 L695.5,282.0 L709.9,183.7 L724.2,232.9 L738.6,282.0 L753.0,280.1 L767.4,192.4 L781.7,223.2 L796.1,303.2 L810.5,308.0" stroke="#0a0aff" stroke-width="3.6" fill="none"/>
<path d="M206.6,289.7 L221.0,329.2 L235.4,315.7 L249.8,254.1 L264.1,274.3 L278.5,323.4 L292.9,308.0 L307.3,232.9 L321.7,260.8 L336.0,299.4 L350.4,297.4 L364.8,218.4 L379.2,240.6 L393.5,291.6 L407.9,283.9 L422.3,189.5 L436.7,229.0 L451.1,283.9 L465.4,282.0 L479.8,204.9 L494.2,244.4 L508.6,304.2 L522.9,297.4 L537.3,218.4 L551.7,264.7 L566.1,313.8 L580.5,308.0 L594.8,227.1 L609.2,248.3 L623.6,308.0 L638.0,304.2 L652.3,210.7 L666.7,236.7 L681.1,293.6 L695.5,291.6 L709.9,201.1 L724.2,240.6 L738.6,289.7 L753.0,289.7 L767.4,204.0 L781.7,233.8 L796.1,299.4 L810.5,296.0" stroke="#d8d8f0" stroke-width="3.6" fill="none"/>
<path d="M206.6,289.7 L221.0,329.2 L235.4,315.7 L249.8,254.1 L264.1,274.3 L278.5,323.4 L292.9,308.0 L307.3,232.9 L321.7,260.8 L336.0,299.4 L350.4,297.4 L364.8,218.4 L379.2,240.6 L393.5,291.6 L407.9,283.9 L422.3,189.5 L436.7,229.0 L451.1,283.9 L465.4,282.0 L479.8,204.9 L494.2,244.4 L508.6,304.2 L522.9,297.4 L537.3,218.4 L551.7,264.7 L566.1,313.8 L580.5,308.0 L594.8,227.1 L609.2,248.3 L623.6,308.0 L638.0,304.2 L652.3,210.7 L666.7,236.7 L681.1,293.6 L695.5,291.6 L709.9,201.1 L724.2,240.6 L738.6,289.7 L753.0,289.7 L767.4,204.0 L781.7,233.8 L796.1,299.4 L810.5,296.0" stroke="#ffffff" stroke-width="3.6" fill="none" stroke-dasharray="2,1.3"/>
<path d="M206.6,302.2 L221.0,343.7 L235.4,317.7 L249.8,248.3 L264.1,280.1 L278.5,329.2 L292.9,310.0 L307.3,242.5 L321.7,264.7 L336.0,304.2 L350.4,293.6 L364.8,206.8 L379.2,246.4 L393.5,300.3 L407.9,283.9 L422.3,140.4 L436.7,218.4 L451.1,307.1 L465.4,302.2 L479.8,212.6 L494.2,240.6 L508.6,333.1 L522.9,317.7 L537.3,225.2 L551.7,271.4 L566.1,329.2 L580.5,300.3 L594.8,222.3 L609.2,230.9 L623.6,311.9 L638.0,295.5 L652.3,181.8 L666.7,229.0 L681.1,265.6 L695.5,261.8 L709.9,165.4 L724.2,229.0 L738.6,289.7 L753.0,289.7 L767.4,181.8 L781.7,228.0 L796.1,304.2 L810.5,305.1" stroke="#00e000" stroke-width="3.6" fill="none"/>
<path d="M163.5,464.5H810.5" stroke="#ffffff" stroke-width="1.2"/>
<path d="M163.5,560.5V30.5H810.5V560.5H163.5" stroke="#f0f0f0" stroke-width="1.1" fill="none"/>
<path d="M807.5,547.5H810.5 M805.5,534.5H810.5 M807.5,520.5H810.5 M805.5,507.5H810.5 M807.5,494.5H810.5 M805.5,480.5H810.5 M807.5,467.5H810.5 M805.5,454.5H810.5 M807.5,441.5H810.5 M805.5,428.5H810.5 M807.5,414.5H810.5 M805.5,401.5H810.5 M807.5,388.5H810.5 M805.5,374.5H810.5 M807.5,361.5H810.5 M805.5,348.5H810.5 M807.5,335.5H810.5 M805.5,322.5H810.5 M807.5,308.5H810.5 M805.5,295.5H810.5 M807.5,282.5H810.5 M805.5,268.5H810.5 M807.5,255.5H810.5 M805.5,242.5H810.5 M807.5,229.5H810.5 M805.5,216.5H810.5 M807.5,202.5H810.5 M805.5,189.5H810.5 M807.5,176.5H810.5 M805.5,162.5H810.5 M807.5,149.5H810.5 M805.5,136.5H810.5 M807.5,123.5H810.5 M805.5,110.5H810.5 M807.5,96.5H810.5 M805.5,83.5H810.5 M807.5,70.5H810.5 M805.5,56.5H810.5 M807.5,43.5H810.5" stroke="#ffffff" stroke-width="1.1"/>
<text x="150.60" y="16.50" font-size="16.72" font-weight="bold" fill="#fff" textLength="568.29" lengthAdjust="spacingAndGlyphs">De Bilt KNMI&#160; (NL)&#160; 2m Temp. &amp; Neerslag | Tue, 05Aug2025 12Z</text>
<text x="136.03" y="563.20" font-size="11.49" fill="#fff" textLength="17.97" lengthAdjust="spacingAndGlyphs">-10</text>
<text x="143.03" y="515.02" font-size="11.49" fill="#fff" textLength="10.97" lengthAdjust="spacingAndGlyphs">-5</text>
<text x="147.00" y="466.84" font-size="11.49" fill="#fff" textLength="7.00" lengthAdjust="spacingAndGlyphs">0</text>
<text x="147.00" y="418.65" font-size="11.49" fill="#fff" textLength="7.00" lengthAdjust="spacingAndGlyphs">5</text>
<text x="140.00" y="370.47" font-size="11.49" fill="#fff" textLength="14.00" lengthAdjust="spacingAndGlyphs">10</text>
<text x="140.00" y="322.29" font-size="11.49" fill="#fff" textLength="14.00" lengthAdjust="spacingAndGlyphs">15</text>
<text x="140.00" y="274.11" font-size="11.49" fill="#fff" textLength="14.00" lengthAdjust="spacingAndGlyphs">20</text>
<text x="140.00" y="225.93" font-size="11.49" fill="#fff" textLength="14.00" lengthAdjust="spacingAndGlyphs">25</text>
<text x="140.00" y="177.75" font-size="11.49" fill="#fff" textLength="14.00" lengthAdjust="spacingAndGlyphs">30</text>
<text x="140.00" y="129.56" font-size="11.49" fill="#fff" textLength="14.00" lengthAdjust="spacingAndGlyphs">35</text>
<text x="140.00" y="81.38" font-size="11.49" fill="#fff" textLength="14.00" lengthAdjust="spacingAndGlyphs">40</text>
<text x="140.00" y="33.20" font-size="11.49" fill="#fff" textLength="14.00" lengthAdjust="spacingAndGlyphs">45</text>
<text x="817.00" y="563.20" font-size="11.49" fill="#fff" textLength="7.00" lengthAdjust="spacingAndGlyphs">0</text>
<text x="817.00" y="430.70" font-size="11.49" fill="#fff" textLength="14.00" lengthAdjust="spacingAndGlyphs">10</text>
<text x="817.00" y="298.20" font-size="11.49" fill="#fff" textLength="14.00" lengthAdjust="spacingAndGlyphs">20</text>
<text x="817.00" y="165.70" font-size="11.49" fill="#fff" textLength="14.00" lengthAdjust="spacingAndGlyphs">30</text>
<text x="817.00" y="33.20" font-size="11.49" fill="#fff" textLength="14.00" lengthAdjust="spacingAndGlyphs">40</text>
<text x="134.13" y="577.00" font-size="11.49" fill="#fff" textLength="58.74" lengthAdjust="spacingAndGlyphs">05Aug 00z</text>
<text x="191.64" y="577.00" font-size="11.49" fill="#fff" textLength="58.74" lengthAdjust="spacingAndGlyphs">06Aug 00z</text>
<text x="249.15" y="577.00" font-size="11.49" fill="#fff" textLength="58.74" lengthAdjust="spacingAndGlyphs">07Aug 00z</text>
<text x="306.66" y="577.00" font-size="11.49" fill="#fff" textLength="58.74" lengthAdjust="spacingAndGlyphs">08Aug 00z</text>
<text x="364.17" y="577.00" font-size="11.49" fill="#fff" textLength="58.74" lengthAdjust="spacingAndGlyphs">09Aug 00z</text>
<text x="421.68" y="577.00" font-size="11.49" fill="#fff" textLength="58.74" lengthAdjust="spacingAndGlyphs">10Aug 00z</text>
<text x="479.19" y="577.00" font-size="11.49" fill="#fff" textLength="58.74" lengthAdjust="spacingAndGlyphs">11Aug 00z</text>
<text x="536.71" y="577.00" font-size="11.49" fill="#fff" textLength="58.74" lengthAdjust="spacingAndGlyphs">12Aug 00z</text>
<text x="594.22" y="577.00" font-size="11.49" fill="#fff" textLength="58.74" lengthAdjust="spacingAndGlyphs">13Aug 00z</text>
<text x="651.73" y="577.00" font-size="11.49" fill="#fff" textLength="58.74" lengthAdjust="spacingAndGlyphs">14Aug 00z</text>
<text x="709.24" y="577.00" font-size="11.49" fill="#fff" textLength="58.74" lengthAdjust="spacingAndGlyphs">15Aug 00z</text>
<text x="766.75" y="577.00" font-size="11.49" fill="#fff" textLength="58.74" lengthAdjust="spacingAndGlyphs">16Aug 00z</text>
<text x="457.00" y="593.00" font-size="11.49" fill="#fff" textLength="60.18" lengthAdjust="spacingAndGlyphs">Date (UTC)</text>
<text transform="translate(136,334.36) rotate(-90)" font-size="11.5" fill="#fff" textLength="79.31" lengthAdjust="spacingAndGlyphs">2m Temp. (°C)</text>
<text transform="translate(842.3,337.06) rotate(-90)" font-size="11.5" fill="#fff" textLength="82.33" lengthAdjust="spacingAndGlyphs">Neerslag (mm)</text>
<text x="120.00" y="604.00" font-size="16.72" fill="#f2f2f2" textLength="187.98" lengthAdjust="spacingAndGlyphs">GFS Ensemble, 52N, 5E</text>
<text x="650.30" y="604.00" font-size="16.72" fill="#f2f2f2" textLength="144.11" lengthAdjust="spacingAndGlyphs">Wetterzentrale.de</text>
<path d="M-2,41H9" stroke="#0a28c8" stroke-width="2"/>
<text x="9.00" y="43.30" font-size="11.49" fill="#fff" textLength="13.63" lengthAdjust="spacingAndGlyphs">P1</text>
<path d="M54,41H65" stroke="#1050c8" stroke-width="2"/>
<text x="65.00" y="43.30" font-size="11.49" fill="#fff" textLength="13.63" lengthAdjust="spacingAndGlyphs">P2</text>
<path d="M-2,56H9" stroke="#1070c8" stroke-width="2"/>
<text x="9.00" y="58.30" font-size="11.49" fill="#fff" textLength="13.63" lengthAdjust="spacingAndGlyphs">P3</text>
<path d="M54,56H65" stroke="#10a0d0" stroke-width="2"/>
<text x="65.00" y="58.30" font-size="11.49" fill="#fff" textLength="13.63" lengthAdjust="spacingAndGlyphs">P4</text>
<path d="M-2,71H9" stroke="#10b0c0" stroke-width="2"/>
<text x="9.00" y="73.30" font-size="11.49" fill="#fff" textLength="13.63" lengthAdjust="spacingAndGlyphs">P5</text>
<path d="M54,71H65" stroke="#10a880" stroke-width="2"/>
<text x="65.00" y="73.30" font-size="11.49" fill="#fff" textLength="13.63" lengthAdjust="spacingAndGlyphs">P6</text>
<path d="M-2,86H9" stroke="#10a868" stroke-width="2"/>
<text x="9.00" y="88.30" font-size="11.49" fill="#fff" textLength="13.63" lengthAdjust="spacingAndGlyphs">P7</text>
<path d="M54,86H65" stroke="#10b040" stroke-width="2"/>
<text x="65.00" y="88.30" font-size="11.49" fill="#fff" textLength="13.63" lengthAdjust="spacingAndGlyphs">P8</text>
<path d="M-2,101H9" stroke="#10c030" stroke-width="2"/>
<text x="9.00" y="103.30" font-size="11.49" fill="#fff" textLength="13.63" lengthAdjust="spacingAndGlyphs">P9</text>
<path d="M54,101H65" stroke="#10c810" stroke-width="2"/>
<text x="65.00" y="103.30" font-size="11.49" fill="#fff" textLength="20.63" lengthAdjust="spacingAndGlyphs">P10</text>
<path d="M-2,116H9" stroke="#c0b810" stroke-width="2"/>
<text x="9.00" y="118.30" font-size="11.49" fill="#fff" textLength="20.63" lengthAdjust="spacingAndGlyphs">P11</text>
<path d="M54,116H65" stroke="#c8b010" stroke-width="2"/>
<text x="65.00" y="118.30" font-size="11.49" fill="#fff" textLength="20.63" lengthAdjust="spacingAndGlyphs">P12</text>
<path d="M-2,131H9" stroke="#c8a010" stroke-width="2"/>
<text x="9.00" y="133.30" font-size="11.49" fill="#fff" textLength="20.63" lengthAdjust="spacingAndGlyphs">P13</text>
<path d="M54,131H65" stroke="#c89010" stroke-width="2"/>
<text x="65.00" y="133.30" font-size="11.49" fill="#fff" textLength="20.63" lengthAdjust="spacingAndGlyphs">P14</text>
<path d="M-2,146H9" stroke="#c88010" stroke-width="2"/>
<text x="9.00" y="148.30" font-size="11.49" fill="#fff" textLength="20.63" lengthAdjust="spacingAndGlyphs">P15</text>
<path d="M54,146H65" stroke="#c07010" stroke-width="2"/>
<text x="65.00" y="148.30" font-size="11.49" fill="#fff" textLength="20.63" lengthAdjust="spacingAndGlyphs">P16</text>
<path d="M-2,161H9" stroke="#c06010" stroke-width="2"/>
<text x="9.00" y="163.30" font-size="11.49" fill="#fff" textLength="20.63" lengthAdjust="spacingAndGlyphs">P17</text>
<path d="M54,161H65" stroke="#c04828" stroke-width="2"/>
<text x="65.00" y="163.30" font-size="11.49" fill="#fff" textLength="20.63" lengthAdjust="spacingAndGlyphs">P18</text>
<path d="M-2,176H9" stroke="#b03828" stroke-width="2"/>
<text x="9.00" y="178.30" font-size="11.49" fill="#fff" textLength="20.63" lengthAdjust="spacingAndGlyphs">P19</text>
<path d="M54,176H65" stroke="#a01818" stroke-width="2"/>
<text x="65.00" y="178.30" font-size="11.49" fill="#fff" textLength="20.63" lengthAdjust="spacingAndGlyphs">P20</text>
<path d="M-2,191H9" stroke="#0a28c8" stroke-width="2"/>
<text x="9.00" y="193.30" font-size="11.49" fill="#fff" textLength="20.63" lengthAdjust="spacingAndGlyphs">P21</text>
<path d="M54,191H65" stroke="#1050c8" stroke-width="2"/>
<text x="65.00" y="193.30" font-size="11.49" fill="#fff" textLength="20.63" lengthAdjust="spacingAndGlyphs">P22</text>
<path d="M-2,206H9" stroke="#1070c8" stroke-width="2"/>
<text x="9.00" y="208.30" font-size="11.49" fill="#fff" textLength="20.63" lengthAdjust="spacingAndGlyphs">P23</text>
<path d="M54,206H65" stroke="#10a0d0" stroke-width="2"/>
<text x="65.00" y="208.30" font-size="11.49" fill="#fff" textLength="20.63" lengthAdjust="spacingAndGlyphs">P24</text>
<path d="M-2,221H9" stroke="#10b0c0" stroke-width="2"/>
<text x="9.00" y="223.30" font-size="11.49" fill="#fff" textLength="20.63" lengthAdjust="spacingAndGlyphs">P25</text>
<path d="M54,221H65" stroke="#10a880" stroke-width="2"/>
<text x="65.00" y="223.30" font-size="11.49" fill="#fff" textLength="20.63" lengthAdjust="spacingAndGlyphs">P26</text>
<path d="M-2,236H9" stroke="#10a868" stroke-width="2"/>
<text x="9.00" y="238.30" font-size="11.49" fill="#fff" textLength="20.63" lengthAdjust="spacingAndGlyphs">P27</text>
<path d="M54,236H65" stroke="#10b040" stroke-width="2"/>
<text x="65.00" y="238.30" font-size="11.49" fill="#fff" textLength="20.63" lengthAdjust="spacingAndGlyphs">P28</text>
<path d="M-2,251H9" stroke="#10c030" stroke-width="2"/>
<text x="9.00" y="253.30" font-size="11.49" fill="#fff" textLength="20.63" lengthAdjust="spacingAndGlyphs">P29</text>
<path d="M54,251H65" stroke="#10c810" stroke-width="2"/>
<text x="65.00" y="253.30" font-size="11.49" fill="#fff" textLength="20.63" lengthAdjust="spacingAndGlyphs">P30</text>
<path d="M0,267H9" stroke="#0a0aff" stroke-width="2.5"/>
<text x="9.00" y="269.30" font-size="11.49" fill="#fff" textLength="39.76" lengthAdjust="spacingAndGlyphs">Control</text>
<path d="M54,267H65" stroke="#fff" stroke-width="2.5"/>
<text x="65.00" y="269.30" font-size="11.49" fill="#fff" textLength="57.84" lengthAdjust="spacingAndGlyphs">Ens. mean</text>
<path d="M0,283H9" stroke="#00e000" stroke-width="2"/>
<text x="9.00" y="285.30" font-size="11.49" fill="#fff" textLength="26.93" lengthAdjust="spacingAndGlyphs">Oper</text>
</svg>
</body></html>
